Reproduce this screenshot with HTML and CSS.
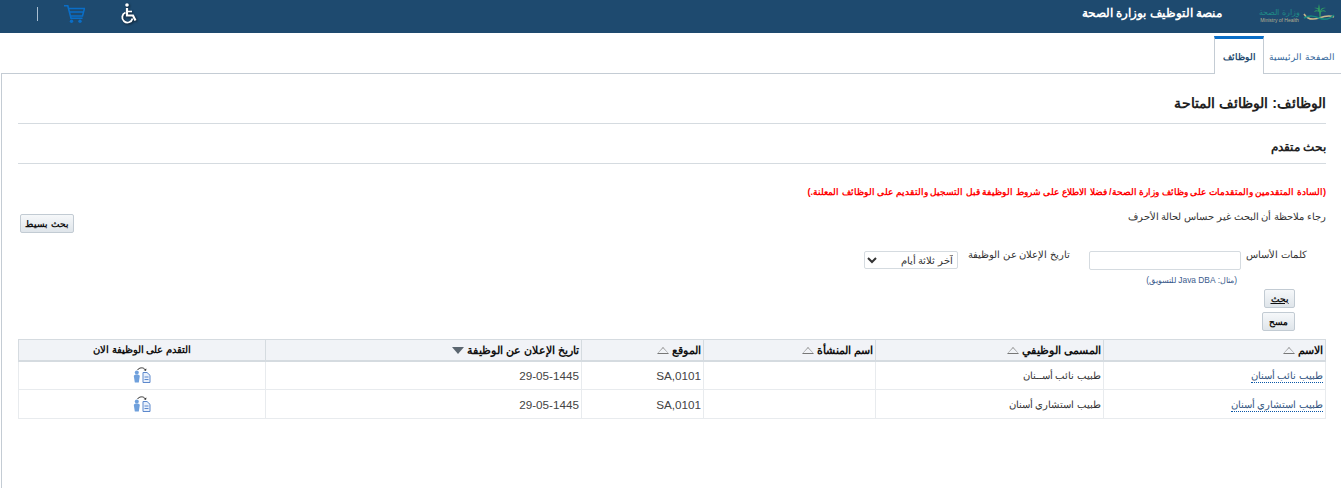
FILE: index.html
```html
<!DOCTYPE html>
<html lang="ar" dir="rtl">
<head>
<meta charset="utf-8">
<title>الوظائف المتاحة</title>
<link rel="stylesheet" href="styles.css">
</head>
<body>
<header class="topbar">
  <div class="brand">
    <div class="logo">
      <svg class="logo-mark" width="32" height="20" viewBox="0 0 32 20">
        <path d="M17 8c-1-3-3-4-6-3 2 0 4 1 5 3-2-1-4-1-5 1 2-1 4-1 5 0l.500 5h1l.500-5c1-1 3-1 5 0-1-2-3-2-5-1 1-2 3-3 5-3-3-1-5 0-6 3 0-3-.500-5-1-7-.500 2-1 4-1 7z" fill="#2f9a63"/>
        <path d="M1 11c3 5 9 6 15 4s10-3 15-1" fill="none" stroke="#c9b98a" stroke-width="1.500"/>
        <path d="M1 15c6-3 10-2 15 0s10 2 15-3" fill="none" stroke="#17897f" stroke-width="1.500"/>
      </svg>
      <div class="logo-text"><span class="logo-ar">وزارة الصحة</span><span class="logo-en">Ministry of Health</span></div>
    </div>
    <div class="app-title">منصة التوظيف بوزارة الصحة</div>
  </div>
  <div class="tools">
    <svg class="tool-access" width="20" height="24" viewBox="0 0 20 24">
      <circle cx="7" cy="3" r="1.800" fill="#fff"/>
      <path d="M7 6v7.500h6l2.500 5" fill="none" stroke="#fff" stroke-width="2.200"/>
      <path d="M7 9.500h5" stroke="#fff" stroke-width="1.600"/>
      <path d="M5.500 10.500a5.200 5.200 0 1 0 7 6" fill="none" stroke="#fff" stroke-width="1.800"/>
    </svg>
    <svg class="tool-cart" width="21" height="18" viewBox="0 0 21 18">
      <path d="M0 .800h3.800l3.200 12.400h11.500" fill="none" stroke="#0a6ec7" stroke-width="1.600"/>
      <path d="M4.500 3.500h16l-2 7.500H6.500M5.500 7h14.500" fill="none" stroke="#0a6ec7" stroke-width="1.500"/>
      <circle cx="7.500" cy="16.200" r="1.700" fill="#0a6ec7"/>
      <circle cx="16" cy="16.200" r="1.700" fill="#0a6ec7"/>
    </svg>
    <span class="tool-sep"></span>
  </div>
</header>

<nav class="tabs">
  <a class="tab">الصفحة الرئيسية</a>
  <a class="tab tab-active">الوظائف</a>
</nav>

<main class="panel">
  <h1 class="page-title">الوظائف: الوظائف المتاحة</h1>
  <h2 class="section-title">بحث متقدم</h2>
  <p class="notice">(السادة المتقدمين والمتقدمات على وظائف وزارة الصحة/ فضلا الاطلاع على شروط الوظيفة قبل التسجيل والتقديم على الوظائف المعلنة.)</p>
  <div class="hint-row">
    <span class="hint">رجاء ملاحظة أن البحث غير حساس لحالة الأحرف</span>
    <button class="btn btn-simple" type="button">بحث بسيط</button>
  </div>
  <form class="search">
    <div class="field field-keywords">
      <label class="label label-kw" for="kw">كلمات الأساس</label>
      <div class="control">
        <input class="input" id="kw" type="text">
        <div class="example">(مثال: Java DBA للتسويق)</div>
      </div>
    </div>
    <div class="field field-date">
      <label class="label" for="dt">تاريخ الإعلان عن الوظيفة</label>
      <select class="select" id="dt"><option>آخر ثلاثة أيام</option></select>
    </div>
  </form>
  <div class="actions">
    <button class="btn btn-search" type="button"><u>بحث</u></button>
    <button class="btn btn-clear" type="button">مسح</button>
  </div>

  <table class="results">
    <colgroup>
      <col class="c1"><col class="c2"><col class="c3"><col class="c4"><col class="c5"><col class="c6">
    </colgroup>
    <thead>
      <tr>
        <th>الاسم <i class="sort"></i></th>
        <th>المسمى الوظيفي <i class="sort"></i></th>
        <th>اسم المنشأة <i class="sort"></i></th>
        <th>الموقع <i class="sort"></i></th>
        <th>تاريخ الإعلان عن الوظيفة <i class="sort sort-on"></i></th>
        <th class="center">التقدم على الوظيفة الان</th>
      </tr>
    </thead>
    <tbody>
      <tr>
        <td class="ar"><a class="link">طبيب نائب أسنان</a></td>
        <td class="ar">طبيب نائب أســنان</td>
        <td></td>
        <td class="num">SA,0101</td>
        <td class="num">29-05-1445</td>
        <td class="center">
          <svg class="apply" width="18" height="16" viewBox="0 0 18 16"><path d="M4.500 3c1.500-2.500 6-3 7.500-.5" fill="none" stroke="#333" stroke-width="1"/><path d="M10.500 3l2.500 1 .5-2.500z" fill="#333"/><circle cx="3.800" cy="5.500" r="2" fill="#6fa0dc"/><path d="M.8 9c0-1 1.200-1.600 3-1.600s3 .6 3 1.600l-1 6.500h-4z" fill="#6fa0dc"/><path d="M10 5.500h4l3 2.800v7.200h-7z" fill="#e8f0fb" stroke="#5c88cc"/><path d="M11.500 10h4M11.500 12.500h4" stroke="#5c88cc"/></svg>
        </td>
      </tr>
      <tr>
        <td class="ar"><a class="link">طبيب استشاري أسنان</a></td>
        <td class="ar">طبيب استشاري أسنان</td>
        <td></td>
        <td class="num">SA,0101</td>
        <td class="num">29-05-1445</td>
        <td class="center">
          <svg class="apply" width="18" height="16" viewBox="0 0 18 16"><path d="M4.500 3c1.500-2.500 6-3 7.500-.5" fill="none" stroke="#333" stroke-width="1"/><path d="M10.500 3l2.500 1 .5-2.500z" fill="#333"/><circle cx="3.800" cy="5.500" r="2" fill="#6fa0dc"/><path d="M.8 9c0-1 1.200-1.600 3-1.600s3 .6 3 1.600l-1 6.500h-4z" fill="#6fa0dc"/><path d="M10 5.500h4l3 2.800v7.200h-7z" fill="#e8f0fb" stroke="#5c88cc"/><path d="M11.500 10h4M11.500 12.500h4" stroke="#5c88cc"/></svg>
        </td>
      </tr>
    </tbody>
  </table>
</main>
</body>
</html>
```

FILE: styles.css
```css
* { box-sizing: border-box; }
html, body { height: 100%; }
body {
  margin: 0;
  background: #fff;
  color: #333;
  font-family: "Liberation Sans", "Noto Sans", Arial, sans-serif;
  font-size: 11px;
  overflow: hidden;
}
.topbar {
  height: 33px;
  background: #1e4a6f;
  display: flex;
  justify-content: space-between;
  align-items: center;
  padding: 0 6px 0 37px;
}
.brand { display: flex; align-items: center; gap: 37px; height: 33px; }
.logo { display: flex; align-items: flex-start; gap: 3px; height: 33px; }
.logo-mark { margin-top: 3px; }
.logo-text {
  display: flex;
  flex-direction: column;
  align-items: center;
  line-height: 9px;
  margin-top: 8px;
  width: 41px;
}
.logo-ar { font-size: 8px; color: #1f8a86; white-space: nowrap; }
.logo-en { font-size: 5px; line-height: 6px; color: #b7b08f; white-space: nowrap; direction: ltr; }
.app-title { color: #fff; font-size: 12.300px; font-weight: bold; margin-bottom: 7px; }
.tools { display: flex; align-items: center; }
.tool-access { margin-left: 35px; margin-bottom: 6px; filter: drop-shadow(1px 1px 1px #0c1c2c); }
.tool-cart { margin-left: 26px; margin-bottom: 5px; }
.tool-sep { width: 1px; height: 14px; background: #a9bfd2; margin-bottom: 5px; }

.tabs {
  height: 41px;
  display: flex;
  align-items: flex-end;
  margin-left: 1px;
  border-bottom: 1px solid #c4ccd4;
}
.tab {
  height: 35px;
  width: 77px;
  padding: 14px 6px 0 0;
  font-size: 9px;
  color: #33669a;
  white-space: nowrap;
}
.tab-active {
  width: 50px;
  height: 38px;
  padding: 13px 0 0;
  text-align: center;
  margin-bottom: -1px;
  background: #fff;
  border: 1px solid #c4ccd4;
  border-top: 3px solid #0a6ec7;
  border-bottom: 0;
  color: #1e4a6f;
  font-weight: bold;
}
.panel {
  margin-left: 1px;
  border-left: 1px solid #c4ccd4;
  height: calc(100% - 74px);
  padding: 0 15px 0 16px;
}
.page-title {
  margin: 0;
  height: 50px;
  padding-top: 21px;
  font-size: 14.200px;
  font-weight: bold;
  color: #222;
  border-bottom: 1px solid #d5dbe0;
}
.section-title {
  margin: 0;
  height: 40px;
  padding-top: 16px;
  font-size: 12px;
  font-weight: bold;
  color: #222;
  border-bottom: 1px solid #d5dbe0;
}
.notice {
  margin: 21px 0 0;
  color: #f00;
  font-weight: bold;
  font-size: 9.200px;
  line-height: 14px;
}
.hint-row {
  display: flex;
  justify-content: space-between;
  align-items: flex-start;
  margin-top: 11px;
  padding-left: 2px;
}
.hint { font-size: 10px; line-height: 14px; }
.btn {
  height: 19px;
  padding: 0 4px;
  font: bold 9px "Liberation Sans", "Noto Sans", Arial, sans-serif;
  color: #111;
  background: linear-gradient(#f6f8fa, #dfe5ea);
  border: 1px solid #c2cbd3;
  border-radius: 2px;
}
.btn-simple { margin-top: 4px; }
.search {
  display: flex;
  margin-top: 15px;
  height: 41px;
}
.field { display: flex; align-items: flex-start; }
.field-keywords { width: 256px; padding-right: 19px; gap: 8px; }
.field-date { gap: 10px; }
.label { font-size: 9.800px; line-height: 13px; white-space: nowrap; }
.label-kw { width: 58px; }
.control { padding-top: 3px; }
.input {
  display: block;
  width: 152px;
  height: 19px;
  border: 1px solid #d5dbe0;
  border-radius: 2px;
  background: #fff;
}
.example { margin-top: 4px; margin-right: 4px; font-size: 8.400px; line-height: 12px; color: #3a5a8c; }
.select {
  width: 94px;
  height: 18px;
  margin-top: 3px;
  font: 9.500px "Liberation Sans", "Noto Sans", Arial, sans-serif;
  border: 1px solid #d5dbe0;
  border-radius: 2px;
  background: #fff;
  color: #333;
}
.actions {
  display: flex;
  flex-direction: column;
  align-items: flex-start;
  gap: 4px;
  padding-right: 31px;
}
.btn-search { width: 31px; padding: 0; }
.btn-clear { width: 33px; padding: 0; }
.results {
  width: 1308px;
  margin-top: 8px;
  border-collapse: collapse;
  table-layout: fixed;
  border: 1px solid #d5dbe0;
}
.c1 { width: 222px; }
.c2 { width: 228px; }
.c3 { width: 172px; }
.c4 { width: 122px; }
.c5 { width: 316px; }
.results th {
  height: 21px;
  padding: 0 2px;
  background: #f1f3f7;
  border: 1px solid #d5dbe0;
  border-bottom-width: 2px;
  color: #111;
  font-size: 10.500px;
  font-weight: bold;
  text-align: right;
}
.results td {
  height: 29px;
  padding: 0 2px;
  border: 1px solid #e8ebee;
  text-align: right;
}
.results .ar { font-size: 9.500px; }
.results .num { font-size: 11.700px; color: #444; }
.results .center { text-align: center; font-size: 10px; }
.link { color: #33557f; border-bottom: 1px dotted #0a58a8; padding-bottom: 1px; }
.sort {
  display: inline-block;
  position: relative;
  width: 0;
  height: 0;
  vertical-align: middle;
  border-left: 6.500px solid transparent;
  border-right: 6.500px solid transparent;
  border-bottom: 7px solid #777;
}
.sort::after {
  content: "";
  position: absolute;
  top: 1px;
  left: -5.500px;
  border-left: 5.500px solid transparent;
  border-right: 5.500px solid transparent;
  border-bottom: 5.500px solid #f1f3f7;
}
.sort-on {
  border-bottom: 0;
  border-top: 7px solid #5b6670;
}
.sort-on::after { display: none; }
.apply { vertical-align: middle; }
```
